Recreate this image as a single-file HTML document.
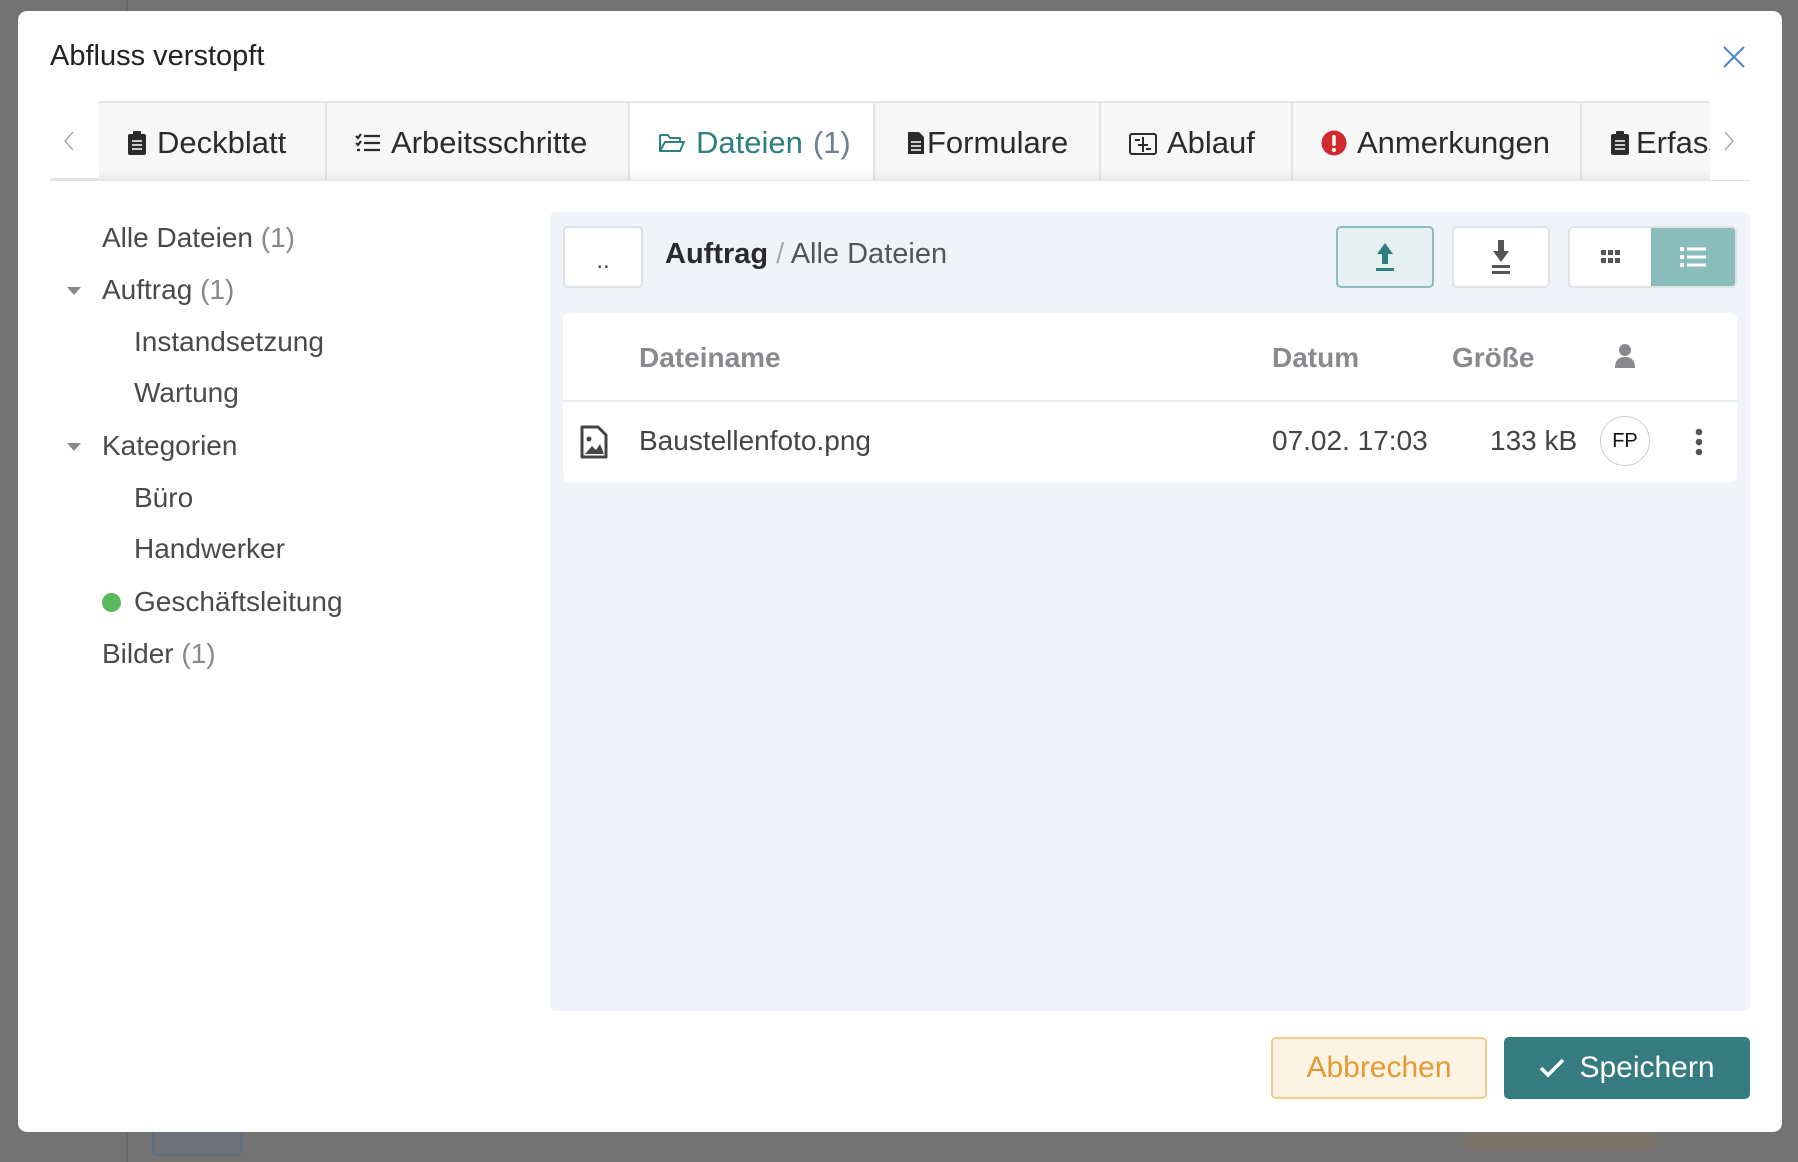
<!DOCTYPE html>
<html><head><meta charset="utf-8"><style>
*{box-sizing:border-box;margin:0;padding:0}
body{width:1798px;height:1162px;background:#727272;font-family:"Liberation Sans",sans-serif;position:relative;overflow:hidden;color:#333}
.abs{position:absolute}
.modal{left:18px;top:11px;width:1764px;height:1121px;background:#fff;border-radius:9px}
.title{left:50px;top:40px;font-size:29px;color:#222}
.tabs{left:99px;top:101px;width:1611px;height:79px;background:#f7f7f8;border-top:2px solid #e3e3e8;overflow:hidden}
.tab{position:absolute;top:0;height:79px;border-right:2px solid #e4e4e8;font-size:31px;color:#2b2b2b;display:flex;align-items:center;padding-left:28px;gap:10px;white-space:nowrap}
.tab.act{background:#fff;color:#2f7f80}
.side{font-size:28px;color:#4a4a4a;position:absolute;transform:translateY(-50%)}
.cnt{color:#888}
.tri{position:absolute;width:0;height:0;border-left:7px solid transparent;border-right:7px solid transparent;border-top:8px solid #888}
.btn{position:absolute;background:#fff;border:2px solid #dfe2e6;border-radius:5px;display:flex;align-items:center;justify-content:center}
.th{position:absolute;top:358px;transform:translateY(-50%);font-size:28px;font-weight:bold;color:#8a8a8e}
.td{position:absolute;top:441px;transform:translateY(-50%);font-size:28px;color:#444}
</style></head><body>
<div class="abs" style="left:126px;top:0;width:2px;height:1162px;background:#666"></div>
<div class="abs" style="left:152px;top:1120px;width:90px;height:36px;border:2px solid #5a6f85;border-radius:6px;background:#6e7278"></div>
<div class="abs" style="left:1465px;top:1120px;width:190px;height:30px;background:#7a7468;border-radius:6px"></div>
<div class="abs modal"></div>
<div class="abs title">Abfluss verstopft</div>
<svg class="abs" style="left:1722px;top:45px" width="24" height="24" viewBox="0 0 24 24"><path d="M2 2L22 22M22 2L2 22" stroke="#4a86c0" stroke-width="2"/></svg>
<div class="abs" style="left:50px;top:178px;width:1700px;height:3px;background:#e2e2e6"></div>
<div class="abs tabs">
 <div class="tab" style="left:0;width:228px"><svg width="20" height="26" viewBox="0 0 20 26"><rect x="1" y="4" width="18" height="21" rx="2" fill="#2b2b2b"/><rect x="6" y="1" width="8" height="5" rx="1" fill="#2b2b2b"/><path d="M5 11h10M5 15h10M5 19h10" stroke="#fff" stroke-width="1.5"/></svg>Deckblatt</div>
 <div class="tab" style="left:228px;width:303px"><svg width="26" height="22" viewBox="0 0 26 22"><path d="M1 4l2 2 3-4M1 11l2 2 3-4M2 18h3M9 4h16M9 11h16M9 18h16" stroke="#2b2b2b" stroke-width="2.2" fill="none"/></svg>Arbeitsschritte</div>
 <div class="tab act" style="left:531px;width:245px"><svg width="28" height="22" viewBox="0 0 28 22"><path d="M2 3h8l2 3h10v4M2 3v16h20l4-9H7L2 19" stroke="#2f7f80" stroke-width="2" fill="none" stroke-linejoin="round"/></svg>Dateien <span style="color:#6e7e90">(1)</span></div>
 <div class="tab" style="left:776px;width:226px;padding-left:32px;gap:2px"><svg width="18" height="24" viewBox="0 0 18 24"><path d="M1 1h11l5 5v17H1z" fill="#2b2b2b"/><path d="M4 11h10M4 15h10M4 19h10" stroke="#fff" stroke-width="1.5"/></svg>Formulare</div>
 <div class="tab" style="left:1002px;width:192px"><svg width="28" height="24" viewBox="0 0 28 24"><rect x="1" y="3" width="26" height="20" rx="2" stroke="#2b2b2b" stroke-width="2" fill="none"/><path d="M6 9h5M14 6v15M9 14h10M17 18h5" stroke="#2b2b2b" stroke-width="2"/></svg>Ablauf</div>
 <div class="tab" style="left:1194px;width:289px"><svg width="26" height="26" viewBox="0 0 26 26"><circle cx="13" cy="13" r="12.5" fill="#d02a2a"/><rect x="11.3" y="5" width="3.4" height="11" rx="1.5" fill="#fff"/><circle cx="13" cy="20" r="2" fill="#fff"/></svg>Anmerkungen</div>
 <div class="tab" style="left:1483px;width:200px;gap:6px"><svg width="20" height="26" viewBox="0 0 20 26"><rect x="1" y="4" width="18" height="21" rx="2" fill="#2b2b2b"/><rect x="6" y="1" width="8" height="5" rx="1" fill="#2b2b2b"/><path d="M5 11h10M5 15h10M5 19h10" stroke="#fff" stroke-width="1.5"/></svg>Erfassung</div>
 <div class="abs" style="left:0;bottom:0;width:1611px;height:10px;background:linear-gradient(rgba(0,0,0,0),rgba(0,0,0,0.05))"></div>
</div>
<div class="abs" style="left:1710px;top:101px;width:40px;height:79px;background:#fff"></div>
<svg class="abs" style="left:63px;top:130px" width="12" height="22"><path d="M10 2L2 11L10 20" stroke="#aaa" stroke-width="1.5" fill="none"/></svg>
<svg class="abs" style="left:1723px;top:130px" width="12" height="22"><path d="M2 2L10 11L2 20" stroke="#aaa" stroke-width="1.5" fill="none"/></svg>

<div class="side" style="left:102px;top:238px">Alle Dateien <span class="cnt">(1)</span></div>
<div class="tri" style="left:67px;top:287px"></div>
<div class="side" style="left:102px;top:290px">Auftrag <span class="cnt">(1)</span></div>
<div class="side" style="left:134px;top:342px">Instandsetzung</div>
<div class="side" style="left:134px;top:393px">Wartung</div>
<div class="tri" style="left:67px;top:443px"></div>
<div class="side" style="left:102px;top:446px">Kategorien</div>
<div class="side" style="left:134px;top:498px">Büro</div>
<div class="side" style="left:134px;top:549px">Handwerker</div>
<div class="abs" style="left:102px;top:593px;width:19px;height:19px;border-radius:50%;background:#5cb85c"></div>
<div class="side" style="left:134px;top:602px">Geschäftsleitung</div>
<div class="side" style="left:102px;top:654px">Bilder <span class="cnt">(1)</span></div>

<div class="abs" style="left:550px;top:212px;width:1200px;height:799px;background:#f0f4f8;border-radius:6px"></div>
<div class="btn" style="left:563px;top:226px;width:80px;height:62px;font-size:24px;color:#444;padding-top:8px">..</div>
<div class="abs" style="left:665px;top:238px;font-size:29px;color:#333"><b style="color:#2a2a2a">Auftrag</b> <span style="color:#aaa">/</span> <span style="color:#555">Alle Dateien</span></div>
<div class="btn" style="left:1336px;top:226px;width:98px;height:62px;background:#e6f0f0;border-color:#8bbcbc"><svg width="22" height="30" viewBox="0 0 22 30"><path d="M11 1L3 12h5v10h6V12h5z" fill="#2f7f80"/><rect x="2" y="26" width="18" height="3" fill="#2f7f80"/></svg></div>
<div class="btn" style="left:1452px;top:226px;width:98px;height:62px"><svg width="22" height="34" viewBox="0 0 22 34"><path d="M8 0h6v11h5L11 22 3 11h5z" fill="#555"/><rect x="2" y="25" width="18" height="3" fill="#555"/><rect x="2" y="31" width="18" height="3" fill="#555"/></svg></div>
<div class="btn" style="left:1568px;top:226px;width:169px;height:62px;justify-content:flex-start;overflow:hidden">
 <div style="width:83px;display:flex;justify-content:center"><svg width="20" height="14" viewBox="0 0 20 14"><g fill="#555"><rect x="0" y="0" width="5" height="5"/><rect x="7" y="0" width="5" height="5"/><rect x="14" y="0" width="5" height="5"/><rect x="0" y="8" width="5" height="5"/><rect x="7" y="8" width="5" height="5"/><rect x="14" y="8" width="5" height="5"/></g></svg></div>
 <div style="width:86px;height:62px;background:#8bbcbc;display:flex;align-items:center;justify-content:center"><svg width="26" height="22" viewBox="0 0 26 22"><g fill="#fff"><rect x="0" y="1" width="4" height="4"/><rect x="0" y="9" width="4" height="4"/><rect x="0" y="17" width="4" height="4"/><rect x="7" y="1.5" width="19" height="3"/><rect x="7" y="9.5" width="19" height="3"/><rect x="7" y="17.5" width="19" height="3"/></g></svg></div>
</div>
<div class="abs" style="left:563px;top:313px;width:1174px;height:169px;background:#fff;border-radius:6px"></div>
<div class="abs" style="left:563px;top:400px;width:1174px;height:2px;background:#e8eaee"></div>
<div class="th" style="left:639px">Dateiname</div>
<div class="th" style="left:1272px">Datum</div>
<div class="th" style="left:1452px">Größe</div>
<svg class="abs" style="left:1614px;top:343px" width="22" height="26" viewBox="0 0 22 26"><circle cx="11" cy="7" r="6" fill="#8a8a8e"/><path d="M1 25c0-8 4-11 10-11s10 3 10 11z" fill="#8a8a8e"/></svg>
<svg class="abs" style="left:580px;top:425px" width="28" height="34" viewBox="0 0 28 34"><path d="M2 2h16l8 8v22H2z" stroke="#444" stroke-width="3" fill="none" stroke-linejoin="round"/><circle cx="9" cy="14" r="2.5" fill="#444"/><path d="M5 29l7-8 4 4 4-6 4 10z" fill="#444"/></svg>
<div class="td" style="left:639px">Baustellenfoto.png</div>
<div class="td" style="left:1272px">07.02. 17:03</div>
<div class="td" style="left:1490px">133 kB</div>
<div class="abs" style="left:1600px;top:416px;width:50px;height:50px;border:1.5px solid #ccc;border-radius:50%;display:flex;align-items:center;justify-content:center;font-size:20px;color:#111">FP</div>
<svg class="abs" style="left:1694px;top:428px" width="10" height="28"><circle cx="5" cy="4" r="3.3" fill="#555"/><circle cx="5" cy="14" r="3.3" fill="#555"/><circle cx="5" cy="24" r="3.3" fill="#555"/></svg>

<div class="abs" style="left:1271px;top:1037px;width:216px;height:62px;background:#fdf3e4;border:2px solid #f2cc8a;border-radius:5px;display:flex;align-items:center;justify-content:center;font-size:30px;color:#e39a33">Abbrechen</div>
<div class="abs" style="left:1504px;top:1037px;width:246px;height:62px;background:#367b7f;border-radius:5px;display:flex;align-items:center;justify-content:center;gap:14px;font-size:30px;color:#fff"><svg width="26" height="20" viewBox="0 0 26 20"><path d="M2 10l7 7L24 2" stroke="#fff" stroke-width="3.5" fill="none"/></svg>Speichern</div>
</body></html>
